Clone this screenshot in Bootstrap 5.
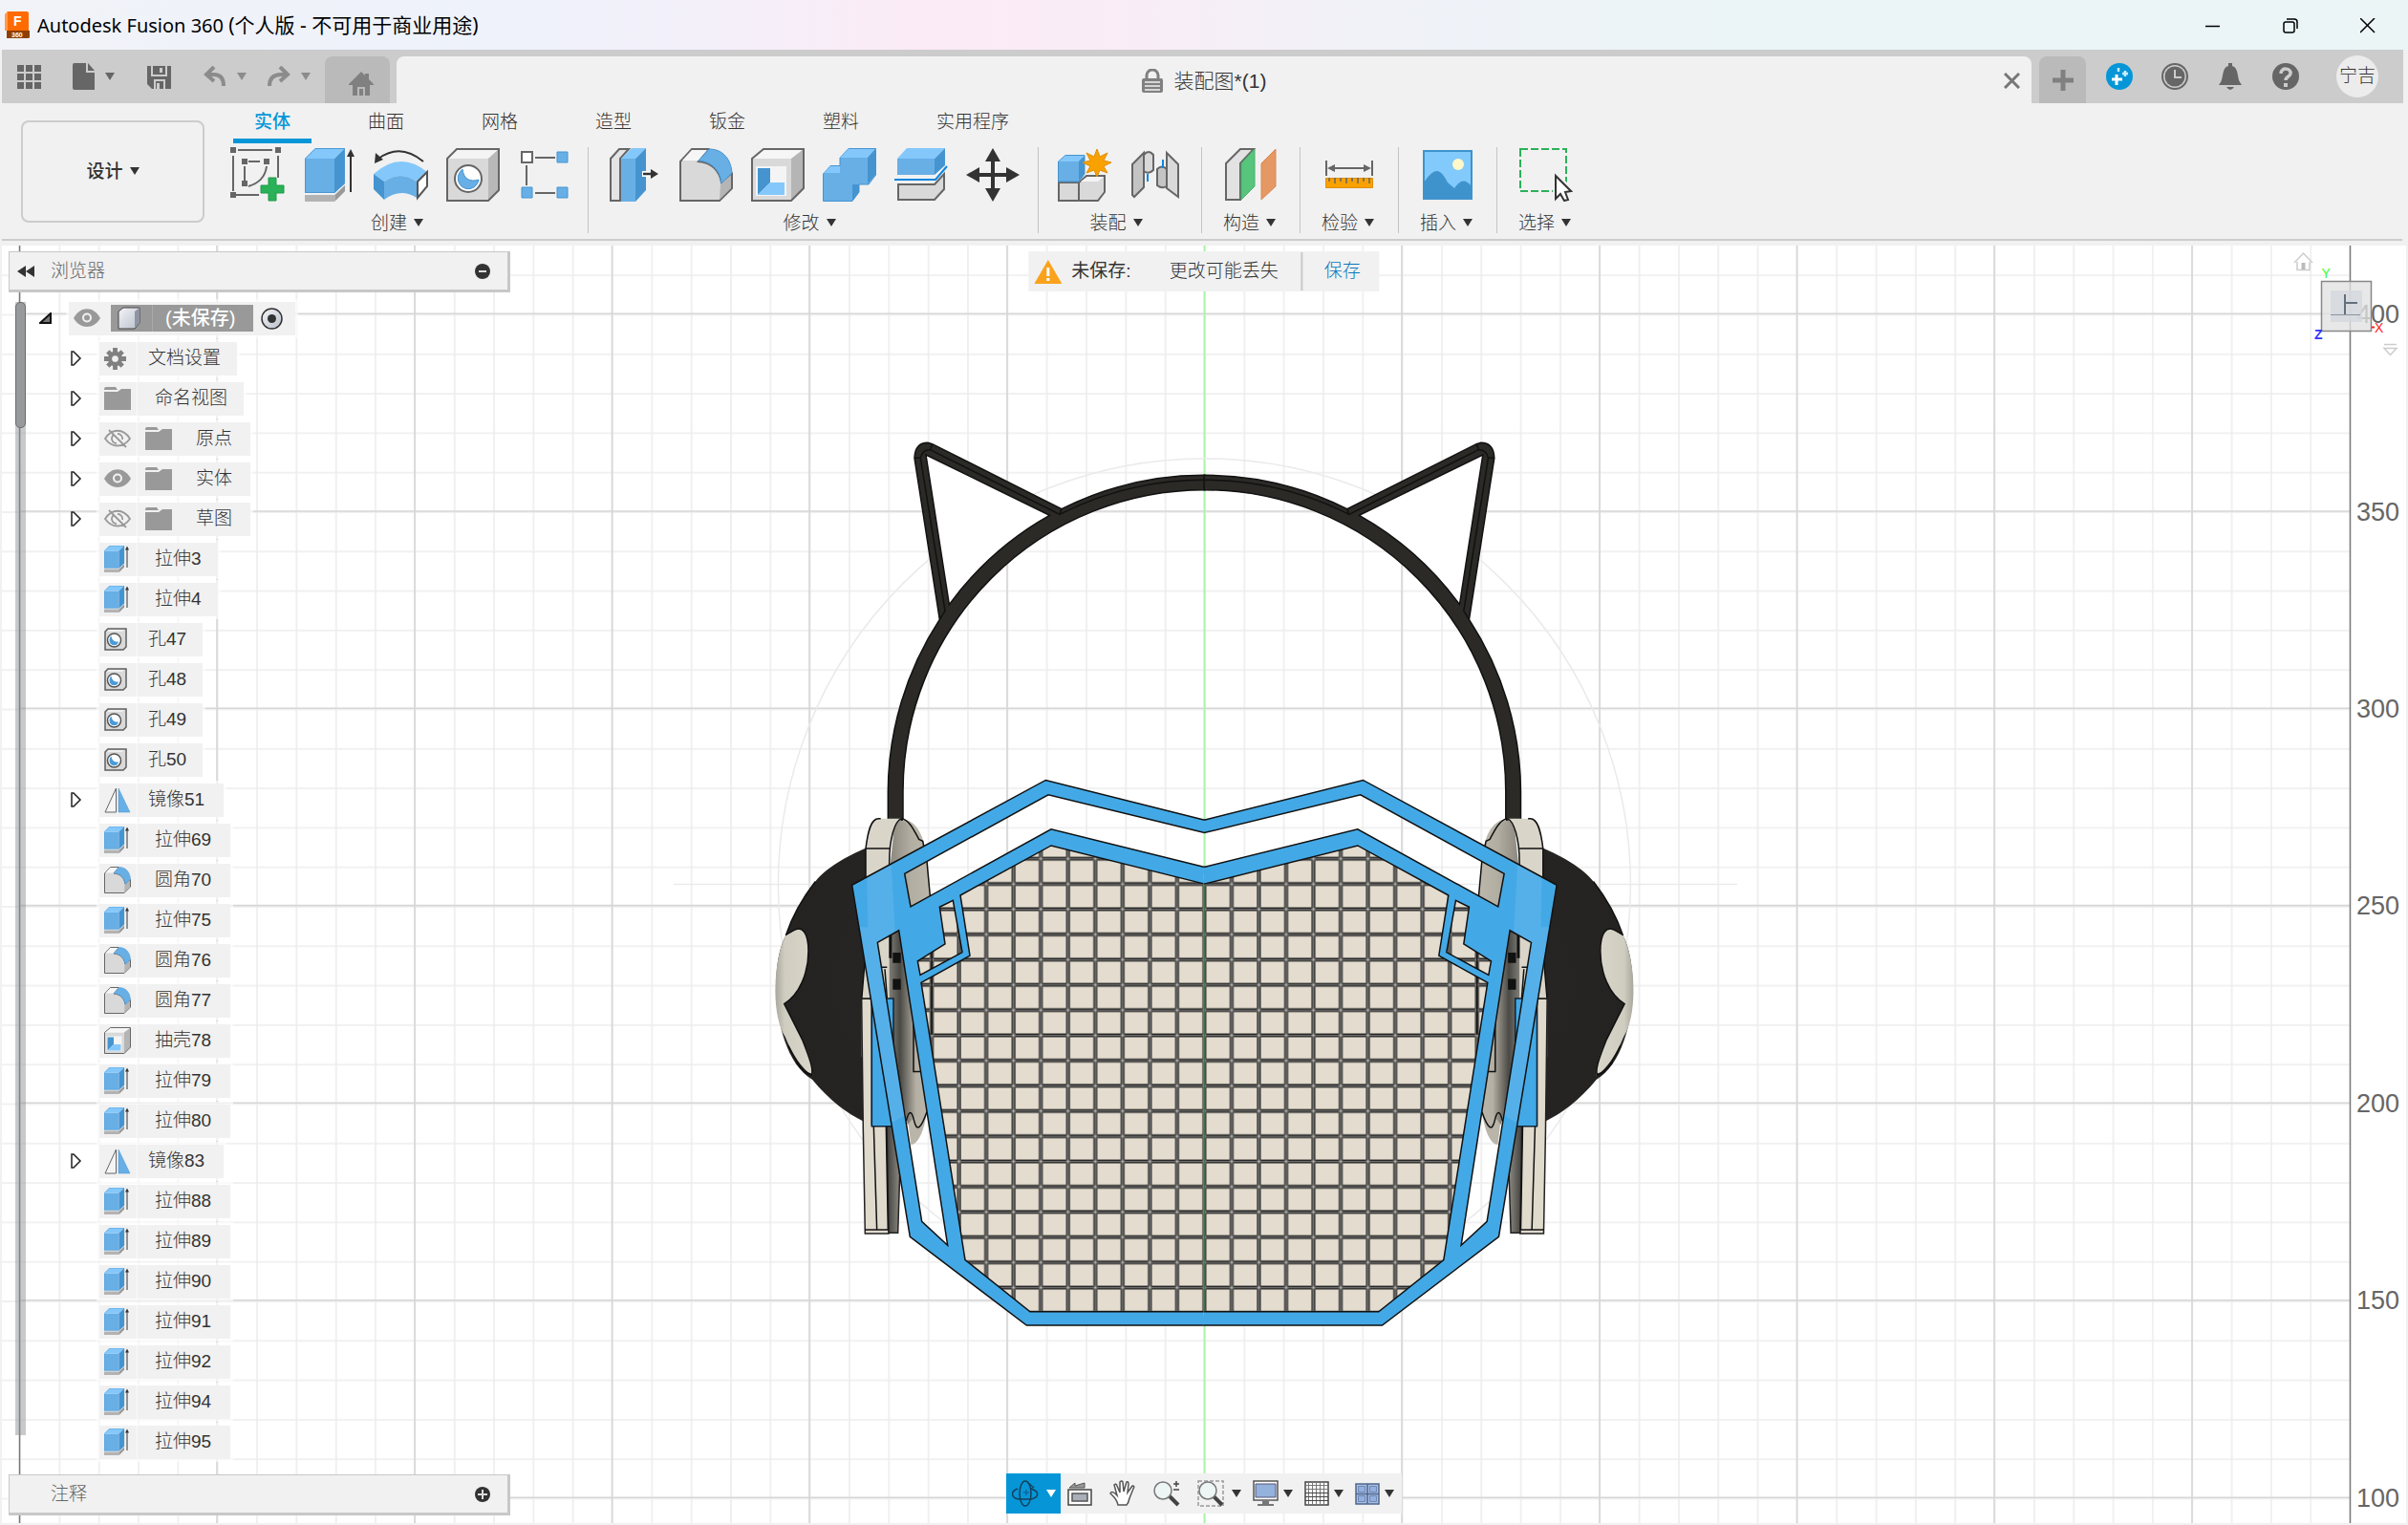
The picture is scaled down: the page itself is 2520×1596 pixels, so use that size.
<!DOCTYPE html>
<html lang="zh-CN">
<head>
<meta charset="utf-8">
<meta name="viewport" content="width=device-width, initial-scale=1">
<title>Autodesk Fusion 360</title>
<link rel="stylesheet" href="https://cdn.jsdelivr.net/npm/bootstrap@5.3.0/dist/css/bootstrap.min.css">
<script src="https://cdn.jsdelivr.net/npm/bootstrap@5.3.0/dist/js/bootstrap.bundle.min.js"></script>
<style>
body{font-family:"Liberation Sans","Noto Sans CJK SC",sans-serif;font-size:19px;line-height:24px;font-weight:300;color:#333;background:#f1f1f1;overflow:hidden}
button{background:none;border:0;padding:0;color:inherit;line-height:inherit;font-weight:inherit}
svg{display:block;flex:none}
.app-title{height:52px;padding:1px 2px 0 5px;font-family:"Noto Sans","Noto Sans CJK SC",sans-serif;font-size:20px;font-weight:400;color:#000;background:linear-gradient(90deg,#f1f3f8 0,#eef2fb 20%,#f3f0fa 29%,#fbebf6 38%,#faecf6 45%,#f0f2f8 58%,#ebf4f7 72%,#ebf5f6 100%)}
.app-title .edition{font-size:21px}
.win-btn{width:81px;height:52px;display:grid;place-items:center}
.doc-bar{height:56px;margin:0 5px 0 2px;background:#ccc;color:#666}
.doc-bar .caret::after{margin-left:10px}
.quick{width:338px}
.doc-tab{height:49px;border-radius:8px 8px 0 0;background:#bababa}
.home-tab{width:68px}
.plus-tab{width:49px;place-items:center}
.doc-active{background:#f1f1f1;font-size:21px;color:#333;margin:0 8px 0 7px;padding-top:2px}
.avatar{width:44px;height:44px;border-radius:50%;background:#ececec;color:#333;margin-left:9px}
.doc-tools{gap:30px;padding:0 26px 0 21px}
.ribbon{height:149px;background:#f1f1f1}
.ribbon-line{height:2px;background:#ccc;margin:0 6px 5px 2px}
.design-btn{width:192px;height:107px;border:2px solid #ccc;border-radius:8px;margin:18px 18px 0 22px;font-weight:500}
.rib-tabs{gap:37px;margin-left:12px;height:42px}
.rib-tab{min-width:82px;height:42px;padding:2px 22px 0;border-bottom:5px solid transparent;white-space:nowrap}
.rib-tab.on{color:#0696d7;border-color:#0696d7;font-weight:500}
.rib-group{padding:0 10px;border-right:1px solid #c4c4c4;height:90px;margin-top:4px}
.rib-group.first{padding:0 8px 0 0}
.rib-group.one{padding:0 14px 0 13px}
.rib-group:last-child{border:0}
.g-name{display:block;margin:0 auto;padding:10px 8px 0 0}
.one .g-name{padding-right:2px}
.tool{width:75px;height:58px;display:grid;place-items:center}
.caret::after{content:"";display:inline-block;border:5px solid transparent;border-top:8px solid currentColor;border-bottom:0;margin-left:7px;vertical-align:3px}
.viewport{background:#fff;margin:0 2px 2px;min-height:0}
.scene{inset:0;width:100%;height:100%}
.side{left:7px;top:6px;bottom:8px;width:525px}
.side-head{height:43px;background:#f1f1f1;border:1px solid #c8c8c8;border-width:1px 3px 3px 1px;color:#666;padding:0 18px 0 8px}
.side-head .ttl{margin-left:15px}
.side-head .solo{margin-left:35px}
.tree{margin-top:6px}
.track{width:11px;margin:4px 0 28px 7px;background:rgba(140,142,146,.48)}
.thumb{height:132px;background:#98999b;border:1px solid #6c6c6c;border-radius:5px}
.t-row{height:42px}
.exp{width:77px;padding-left:47px}
.root .exp{width:45px;padding-left:14px}
.chip{height:35px;background:#f1f1f1;box-shadow:0 0 0 3px rgba(255,255,255,.6)}
.root .chip{padding:0 13px 0 5px}
.ic{width:40px;padding-left:5px;border-right:1px solid #fafafa;height:35px}
.lbl{padding:0 17px 0 18px}
.lbl.n{padding-left:11px}
.lbl.d{padding-right:20px}
.lbl.f{padding:0 19px 0 25px}
.rootsel{height:28px;background:#999;color:#fff;font-size:20px;font-weight:500;margin-left:11px}
.rootsel .ic{width:44px;height:28px;padding-left:7px;border-color:#aaa}
.rootsel .txt{padding:0 19px 0 13px}
.notice{left:50%;transform:translateX(-50%);top:6px;height:42px;background:#f1f1f1;padding-left:6px}
.notice .sep{width:2px;height:40px;background:#c8c8c8}
.notice strong{margin-left:10px}
.notice .msg{margin:0 24px 0 40px}
.notice .save{color:#0a78bd;padding:0 20px 0 22px}
.view-bar{left:50%;transform:translateX(-50%);bottom:10px;height:42px;background:#f1f1f1;padding-right:8px}
.view-bar .caret::after{margin-left:5px;border-width:8px 5px 0}
.orbit{width:57px;height:42px;background:#0696d7;color:#fff;margin-right:7px}
.view-bar .orbit::after,.view-bar .wide::after{margin-left:8px}
.ln{fill:none;stroke:#111;stroke-width:1.5}
.model *{vector-effect:non-scaling-stroke}
</style>
</head>
<body>
<svg width="0" height="0" class="position-absolute" aria-hidden="true">
<defs>
<linearGradient id="gBox" x1="0" y1="0" x2="1" y2="1"><stop offset="0" stop-color="#f4f5f8"/><stop offset="1" stop-color="#b9bfcb"/></linearGradient>
<linearGradient id="gDark" x1="0" y1="0" x2="1" y2="0"><stop offset="0" stop-color="#8a877f"/><stop offset=".45" stop-color="#4a4945"/><stop offset="1" stop-color="#b3aea2"/></linearGradient>
<linearGradient id="gLow" x1="0" y1="0" x2="1" y2="0"><stop offset="0" stop-color="#3f3e3b"/><stop offset="1" stop-color="#8d8a82"/></linearGradient>
<linearGradient id="gCup" x1="0" y1="0" x2="1" y2="0"><stop offset="0" stop-color="#8b877d"/><stop offset=".5" stop-color="#b3aea2"/><stop offset="1" stop-color="#bdb8ac"/></linearGradient>
<radialGradient id="gEar" cx=".8" cy=".5" r=".9"><stop offset="0" stop-color="#262523"/><stop offset=".75" stop-color="#242321"/><stop offset="1" stop-color="#33322f"/></radialGradient>
<linearGradient id="gSpot" x1="0" y1="0" x2="1" y2="0"><stop offset="0" stop-color="#a9a79c"/><stop offset=".25" stop-color="#cfccc0"/><stop offset="1" stop-color="#dad6ca"/></linearGradient>
<pattern id="pMinor" x="20.1" y="39.4" width="41.33" height="41.3" patternUnits="userSpaceOnUse"><path d="M1 0V42M0 1H42" stroke="#ededed" stroke-width="1.6" fill="none"/></pattern>
<pattern id="pMesh" x="1368.2" y="1396.5" width="85.6" height="69" patternUnits="userSpaceOnUse">
<rect x="37" width="12" height="69" fill="#161616"/><rect y="29.5" width="86" height="10" fill="#161616"/><rect x="40" width="6" height="69" fill="#727272"/><rect y="33" width="86" height="3.6" fill="#727272"/><rect x="37" y="29.5" width="12" height="10" fill="#77746f"/><rect x="41" y="32.5" width="4" height="4" fill="#ddd"/></pattern>
<clipPath id="cOpen"><path d="M1413 327 930 222 645 358 580 390 511 538 522 597 660 1355 864 1497H1413Z"/></clipPath>
<symbol id="i-extrude" viewBox="0 0 52 56"><path fill="#68afe6" d="M0 11H31V47H0z"/><path fill="#84c8fb" d="M0 11 11 0H42L31 11z"/><path fill="#4594d0" d="M31 11 42 0V37L31 47z"/><path fill="none" stroke="#4a98d3" d="M.5 11 11 .5H41.5V37L31 46.5H.5z"/><path fill="#b3b3b3" d="M0 49H31L42 39V45L31 56H0z"/><path fill="#999" d="M32 49 42 39V45L32 55z"/><path stroke="#333" stroke-width="2" d="M48 6V46"/><path fill="#333" d="M44 9 48 1 52 9z"/></symbol>
<symbol id="i-hole" viewBox="0 0 56 56"><path fill="#d9d9d9" d="M1 11 11 1H55V44L44 55H1z"/><path fill="#f4f4f4" d="M1 11 11 1H55L44 11z"/><path fill="#b8b8b8" d="M44 11 55 1V44L44 55z"/><path fill="none" stroke="#666" stroke-width="2" d="M1 11 11 1H55V44L44 55H1z"/><circle cx="23" cy="32" r="14" fill="#fff" stroke="#666" stroke-width="2"/><path fill="#68afe6" stroke="#4594d0" d="M17 22C18 32 25 36 34 33C32 43 22 45 16 40C10 34 12 26 17 22z"/></symbol>
<symbol id="i-hole-s" viewBox="0 0 24 24"><path fill="#d9d9d9" stroke="#5f5f5f" stroke-width="1.500" d="M1 4 4 1H23V20L20 23H1z"/><path fill="#f0f0f0" d="M3 4 5 2H21L19 4z"/><circle cx="10.500" cy="13" r="7" fill="#fff" stroke="#555" stroke-width="1.500"/><path fill="#4b9bd6" d="M7.500 8.500C8 13 11 15 15 14.500C14 18.500 10 19.500 7 17C5 14.500 5 10.500 7.500 8.500z"/></symbol>
<symbol id="i-fillet" viewBox="0 0 56 56"><path fill="#d9d9d9" stroke="#666" stroke-width="2" d="M1 14 13 1H30L20 14C34 15 42 24 44 36L55 27V42L42 55H1z"/><path fill="#f6f6f6" d="M3 13 13 2H29L20 13z"/><path fill="#b5b5b5" d="M43 38 54 28V42L42 54z"/><path fill="#68afe6" stroke="#4594d0" d="M20 13 31 1C46 1 54 12 55 26L44 37C43 24 34 14 20 13z"/></symbol>
<symbol id="i-shell" viewBox="0 0 56 56"><path fill="#d9d9d9" d="M1 11H42V55H1z"/><path fill="#f6f6f6" d="M1 11 13 1H55L42 11z"/><path fill="#b5b5b5" d="M42 11 55 1V42L42 55z"/><path fill="none" stroke="#666" stroke-width="2" d="M1 11 13 1H55V42L42 55H1z"/><path fill="#f4f4f4" d="M5 19H37V50H5z"/><path fill="#4594d0" d="M7 21H20V36L7 49z"/><path fill="#84c8fb" d="M7 49 20 36H35V49z"/></symbol>
<symbol id="i-mirror" viewBox="0 0 56 56"><path fill="#f4f4f4" stroke="#666" stroke-width="2" d="M25 4V54H2z"/><path fill="#68afe6" stroke="#4594d0" d="M30 4V54H54z"/></symbol>
<symbol id="i-folder" viewBox="0 0 28 24"><path fill="#999" d="M0 2Q0 0 2 0H12L14 3H0zM0 5H14L18 2H28V24H0z"/></symbol>
<symbol id="i-eye" viewBox="0 0 28 20"><path fill="#999" d="M0 10C7-3 21-3 28 10C21 22 7 22 0 10z"/><circle cx="14" cy="9.500" r="5" fill="#f1f1f1"/><circle cx="14" cy="9.500" r="3" fill="#999"/></symbol>
<symbol id="i-hide" viewBox="0 0 28 20"><path fill="none" stroke="#999" stroke-width="1.800" d="M1 10C8-1 20-1 27 10C20 20 8 20 1 10zM5 1 23 19M10 6A5 5 0 0 0 13 15M14 5A5 5 0 0 1 19 11"/></symbol>
<symbol id="i-gear" viewBox="0 0 24 24"><g stroke="#808080" stroke-width="5"><path d="M12 0V24M0 12H24M4 4 20 20M20 4 4 20"/></g><circle cx="12" cy="12" r="8" fill="#808080"/><circle cx="12" cy="12" r="3.500" fill="#f1f1f1"/></symbol>
<symbol id="i-tri" viewBox="0 0 12 16"><path fill="#fff" stroke="#222" stroke-width="1.500" d="M1 1V15L3 15 10 8 3 1z"/></symbol>
</defs></svg>

<div class="d-flex flex-column vh-100">
<header class="app-title d-flex align-items-center">
<svg width="26" height="29" viewBox="0 0 26 29"><path fill="#ff6b00" d="M3 0H23Q25 0 25 2V20H0V4z"/><path fill="#ff9a4d" d="M3 0 3 20H0V3z"/><path fill="#8f3e00" d="M2 20H26V27Q26 28 24 28H2z"/><text x="9" y="15" font-family="Liberation Sans" font-size="14" font-weight="700" fill="#fff">F</text><text x="7" y="27" font-family="Liberation Sans" font-size="7" font-weight="700" fill="#fff">360</text></svg>
<span class="ms-2 me-auto">Autodesk Fusion 360 <span class="edition">(个人版 - 不可用于商业用途)</span></span>
<button class="win-btn" aria-label="最小化"><svg width="16" height="16"><path d="M0 8.500H15" stroke="#000" stroke-width="1.500"/></svg></button>
<button class="win-btn" aria-label="还原"><svg width="16" height="16" fill="none" stroke="#000" stroke-width="1.500"><rect x="1" y="4" width="11" height="11" rx="2"/><path d="M4 1H12Q15 1 15 4V11"/></svg></button>
<button class="win-btn" aria-label="关闭"><svg width="16" height="16"><path d="M0 0 15 15M15 0 0 15" stroke="#000" stroke-width="1.500"/></svg></button>
</header>

<div class="doc-bar d-flex align-items-end">
<div class="quick d-flex align-items-center h-100">
<button class="ms-3" aria-label="数据面板"><svg width="25" height="25" fill="#666"><path d="M0 0H7V7H0zM9 0H16V7H9zM18 0H25V7H18zM0 9H7V16H0zM9 9H16V16H9zM18 9H25V16H18zM0 18H7V25H0zM9 18H16V25H9zM18 18H25V25H18z"/></svg></button>
<button class="d-flex align-items-center caret" style="margin-left:33px" aria-label="文件"><svg width="24" height="28" fill="#666"><path d="M2 0H14V10H23V28H2Q0 28 0 26V2Q0 0 2 0z"/><path d="M16 0 23 8H16z"/></svg></button>
<button style="margin-left:34px" aria-label="保存文件"><svg width="25" height="25"><path fill="#666" d="M0 1H25V25H5L0 20z"/><path fill="none" stroke="#ccc" stroke-width="2" d="M5 1V11H20V1M8 25V16H18V25"/><path fill="#ccc" d="M13 3H16V8H13zM10 19H13V25H10z"/></svg></button>
<button class="d-flex align-items-center caret" style="margin-left:34px;color:#8c8c8c" aria-label="撤消"><svg width="25" height="22" fill="none" stroke="#8c8c8c" stroke-width="4"><path d="M11 1 3 9 11 16M3 9H11Q21 9 21 21"/></svg></button>
<button class="d-flex align-items-center caret" style="margin-left:22px;color:#8c8c8c" aria-label="重做"><svg width="25" height="22" fill="none" stroke="#8c8c8c" stroke-width="4"><path d="M13 1 21 9 13 16M21 9H14Q2 9 2 21"/></svg></button>
</div>
<button class="doc-tab home-tab d-flex justify-content-center align-items-center pt-1" aria-label="主页"><svg width="26" height="25" fill="#808080" class="ms-2 mt-1"><path d="M13 0 17 4V2H21V8L26 13V14H22V25H4V14H0V13z"/><path fill="none" stroke="#bababa" stroke-width="2" d="M10 25V17H16V25"/></svg></button>
<div class="doc-tab doc-active flex-grow-1 d-flex align-items-center">
<span class="ms-auto me-auto ps-2 d-flex align-items-center"><svg width="22" height="26" class="me-2"><path fill="none" stroke="#808080" stroke-width="3" d="M5 12V7A6 6 0 0 1 17 7V12"/><rect y="10" width="22" height="15" rx="2" fill="#808080"/><path stroke="#f1f1f1" stroke-width="1.500" d="M3 14H19M3 18H19M3 22H19"/></svg><span class="ms-1">装配图*(1)</span></span>
<button class="me-2 pe-1" aria-label="关闭文档"><svg width="17" height="17"><path d="M1 1 16 16M16 1 1 16" stroke="#777" stroke-width="3"/></svg></button>
</div>
<button class="doc-tab plus-tab d-grid" aria-label="新建"><svg width="22" height="22"><path d="M11 0V22M0 11H22" stroke="#808080" stroke-width="5"/></svg></button>
<div class="doc-tools d-flex align-items-center h-100">
<button aria-label="扩展"><svg width="28" height="28"><circle cx="14" cy="14" r="14" fill="#0696d7"/><path d="M11 12V23M6 17H17" stroke="#fff" stroke-width="3"/><path d="M20 8V14M17 11H23M13 5V9" stroke="#c8ecff" stroke-width="2.500"/></svg></button>
<button aria-label="作业状态"><svg width="28" height="28"><circle cx="14" cy="14" r="13" fill="none" stroke="#666" stroke-width="2"/><circle cx="14" cy="14" r="10.500" fill="#666"/><path d="M14 7V15H21" fill="none" stroke="#ccc" stroke-width="2"/></svg></button>
<button aria-label="通知"><svg width="28" height="28" fill="#666"><path d="M12 0H16V3C23 5 21 15 24 20L26 23H2L4 20C7 15 5 5 12 3zM10 25H18Q14 31 10 25z"/></svg></button>
<button aria-label="帮助"><svg width="28" height="28"><circle cx="14" cy="14" r="14" fill="#666"/><path d="M9 11C9 4 20 5 19 11C19 14 14 14 14 18" fill="none" stroke="#ccc" stroke-width="3.500"/><path fill="#ccc" d="M12 21H16V25H12z"/></svg></button>
<button class="avatar">宁吉</button>
</div>
</div>

<div class="ribbon d-flex flex-column">
<div class="d-flex flex-grow-1">
<button class="design-btn caret">设计</button>
<div>
<nav class="rib-tabs d-flex">
<button class="rib-tab on">实体</button><button class="rib-tab">曲面</button><button class="rib-tab">网格</button><button class="rib-tab">造型</button><button class="rib-tab">钣金</button><button class="rib-tab">塑料</button><button class="rib-tab">实用程序</button>
</nav>
<div class="d-flex">
<div class="rib-group first"><div class="d-flex">
<button class="tool" aria-label="创建草图"><svg width="58" height="58" viewBox="0 0 58 58"><path fill="none" stroke="#666" stroke-width="2" d="M3 9V46M8 3H44M50 9V32M3 50H30M15 20V36M19 15H31M38 20Q36 36 19 41"/><path fill="#666" d="M0 0H6V6H0zM47 0H53V6H47zM0 47H6V53H0zM12 12H18V18H12zM35 12H41V18H35zM12 35H18V41H12z"/><path fill="#2bb158" stroke="#1f9a49" d="M40 32H48V40H56V48H48V56H40V48H32V40H40z"/></svg></button>
<button class="tool" aria-label="拉伸"><svg width="52" height="56"><use href="#i-extrude"/></svg></button>
<button class="tool" aria-label="旋转"><svg width="58" height="56" viewBox="0 0 58 56"><path fill="none" stroke="#333" stroke-width="2" d="M5 11Q28-6 52 14"/><path fill="#333" d="M1 16 2 5 10 12z"/><path fill="#84c8fb" d="M0 27Q28 2 56 25L45 35Q28 23 11 35z"/><path fill="#68afe6" d="M11 35Q28 23 45 35V52Q28 41 11 54z"/><path fill="#4594d0" d="M0 27 11 35V54L0 43z"/><path fill="#fff" stroke="#555" stroke-width="2" d="M46 35 56 25V40L46 52z"/></svg></button>
<button class="tool" aria-label="孔"><svg width="56" height="56"><use href="#i-hole"/></svg></button>
<button class="tool" aria-label="阵列"><svg width="50" height="58"><path stroke="#666" stroke-width="2" d="M15 11H36M6 19V40M15 48H36"/><path fill="#fff" stroke="#666" stroke-width="2" d="M1 5H12V16H1z"/><path fill="#68afe6" stroke="#4594d0" d="M38 5H49V16H38zM38 42H49V53H38zM1 42H12V53H1z"/></svg></button>
</div><button class="g-name caret">创建</button></div>

<div class="rib-group"><div class="d-flex">
<button class="tool" aria-label="按拉"><svg width="52" height="56"><path fill="#e4e4e4" stroke="#666" stroke-width="2" d="M1 11 10 1H20L11 11V55H1z"/><path fill="#68afe6" d="M12 11H27V56H12z"/><path fill="#84c8fb" d="M12 11 23 0H38L27 11z"/><path fill="#4594d0" d="M27 11 38 0V44L27 56z"/><path stroke="#fff" stroke-width="6" d="M34 27H42"/><path stroke="#333" stroke-width="2.500" d="M35 27H45"/><path fill="#333" d="M43 22 51 27 43 32z"/></svg></button>
<button class="tool" aria-label="圆角"><svg width="56" height="56"><use href="#i-fillet"/></svg></button>
<button class="tool" aria-label="抽壳"><svg width="56" height="56"><use href="#i-shell"/></svg></button>
<button class="tool" aria-label="合并"><svg width="56" height="56"><path fill="#68afe6" stroke="#4594d0" d="M.5 27 8 18.500H18V10L27 .5H55.500V28L48 38H38V46L31 55.500H.5z"/><path fill="#84c8fb" d="M18 10 27 1H55L47 10zM1 26 8 19H18V26z"/><path fill="#4594d0" d="M47 10 55 1V28L47 37zM31 38H38V46L31 55z"/></svg></button>
<button class="tool" aria-label="分割实体"><svg width="56" height="56"><path fill="#68afe6" d="M3 11H42V28H3z"/><path fill="#84c8fb" d="M3 11 13 0H53L42 11z"/><path fill="#4594d0" d="M42 11 53 0V18L42 28z"/><path fill="none" stroke="#0c86e0" stroke-width="2" d="M0 33H43L55 19"/><path fill="#d9d9d9" stroke="#666" stroke-width="2" d="M4 38H42L52 27V43L42 54H4z"/></svg></button>
<button class="tool" aria-label="移动"><svg width="56" height="56" fill="#333"><path d="M26 12H30V26H44V30H30V44H26V30H12V26H26z"/><path d="M28 0 36 14H20zM28 56 20 42H36zM0 28 14 20V36zM56 28 42 36V20z"/></svg></button>
</div><button class="g-name caret">修改</button></div>

<div class="rib-group"><div class="d-flex">
<button class="tool" aria-label="新建零部件"><svg width="56" height="56"><path fill="#d9d9d9" stroke="#666" stroke-width="2" d="M1 36H22L30 29H49V46L42 55H1zM22 36V55"/><path fill="#f4f4f4" d="M24 35 31 30H48L42 35z"/><path fill="#68afe6" stroke="#4594d0" d="M.5 14 8 7.500H28V27L22 35H.5z"/><path fill="#84c8fb" d="M1 14 8 8H28L22 14z"/><path fill="#4594d0" d="M22 14 28 8V27L22 34z"/><path fill="#f9a100" stroke="#e08f00" d="M41 1 44 9 52 5 48 13 56 15 48 19 52 26 44 23 41 30 38 23 30 26 34 19 26 15 34 13 30 5 38 9z"/></svg></button>
<button class="tool" aria-label="联接"><svg width="52" height="52" stroke="#666" stroke-width="2"><path fill="#c4c4c4" d="M1 15 13 3V39L3 49 1 47z"/><path fill="#d9d9d9" d="M13 5Q18-1 23 5V21Q18 26 13 22z"/><path fill="#d9d9d9" d="M37 3 49 15V49L37 40z"/><path fill="#c4c4c4" d="M27 20Q32 15 37 20V38Q32 41 27 37z"/><path stroke="#0c86e0" d="M17 25V33M33 10V19"/></svg></button>
</div><button class="g-name caret">装配</button></div>

<div class="rib-group one"><button class="tool" aria-label="偏移平面"><svg width="54" height="56"><path fill="#e2e2e2" stroke="#666" stroke-width="2" d="M1 16 16 1H30L16 16V54H1z"/><path fill="#57c57c" stroke="#44b06a" d="M17 16 31 1V40L17 54z"/><path fill="#e59863" stroke="#d88b57" d="M38 16 53 1V40L38 54z"/></svg></button><button class="g-name caret">构造</button></div>
<div class="rib-group one"><button class="tool" aria-label="测量"><svg width="50" height="30"><path stroke="#666" stroke-width="2" d="M1 0V16M49 0V16M6 8H44"/><path fill="#666" d="M2 8 10 4V12zM48 8 40 12V4z"/><path fill="#f9a100" stroke="#e08f00" d="M.5 18.500H49.500V28.500H.5z"/><path stroke="#666" stroke-width="1.500" d="M4 18V22M10 18V24M16 18V22M22 18V24M28 18V22M34 18V24M40 18V22M46 18V24"/></svg></button><button class="g-name caret">检验</button></div>
<div class="rib-group one"><button class="tool" aria-label="插入图像"><svg width="52" height="52"><path fill="#82cafb" stroke="#3f93cd" stroke-width="2" d="M1 1H51V51H1z"/><circle cx="37" cy="15" r="6" fill="#fff8c9"/><path fill="#3f93cd" d="M1 34C12 18 18 18 26 34L33 40C40 30 45 31 51 38V51H1z"/></svg></button><button class="g-name caret">插入</button></div>
<div class="rib-group one"><button class="tool" aria-label="框选"><svg width="56" height="56"><path fill="none" stroke="#2bb158" stroke-width="2" stroke-dasharray="8 3" d="M1 1H49V45H1z"/><path fill="#fff" stroke="#f1f1f1" stroke-width="6" d="M38 29V53L44 48 48 55 52 54 48 46 55 45z"/><path fill="#fff" stroke="#333" stroke-width="2" d="M38 29V53L43 48 47 55 51 54 48 46 54 45z"/></svg></button><button class="g-name caret">选择</button></div>
</div>
</div>
</div>
<div class="ribbon-line"></div>
</div>

<main class="viewport flex-grow-1 position-relative overflow-hidden">
<svg class="scene position-absolute" viewBox="2 257 2516 1337" preserveAspectRatio="xMidYMid slice">
<rect x="2" y="257" width="2458" height="1337" fill="url(#pMinor)"/>
<path stroke="#d6d6d6" stroke-width="1.600" fill="none" d="M227 257V1594M434 257V1594M640.500 257V1594M847 257V1594M1054 257V1594M1467 257V1594M1674 257V1594M1880.500 257V1594M2087 257V1594M2294 257V1594M20 328.300H2459M20 535H2459M20 741.300H2459M20 947.600H2459M20 1154.200H2459M20 1360.700H2459M20 1567.300H2459"/>
<path stroke="#777" stroke-width="1.500" d="M20.500 257V1594M2459.500 257V1594"/>
<path stroke="#a9f5a9" stroke-width="2" d="M1260.500 257V1594"/>
<g fill="none" stroke="#eaeaea" stroke-width="1.500"><circle cx="1260.400" cy="926" r="446"/><path d="M705 925.500H1818"/></g>
<g fill="#666" font-family="Liberation Sans" font-size="27" text-anchor="end"><text x="2511" y="338">400</text><text x="2511" y="545">350</text><text x="2511" y="751">300</text><text x="2511" y="957">250</text><text x="2511" y="1164">200</text><text x="2511" y="1370">150</text><text x="2511" y="1577">100</text></g>

<!-- one half of the headset and mask; the other half is its mirror image -->
<g id="half">
<g class="model" transform="translate(790 440) scale(.333333)">
<path fill="#2b2a27" stroke="#111" stroke-width="1.500" d="M418 1255V1165A993 993 0 0 1 580 625L501 118Q503 70 543 70L557 74 963 278A993 993 0 0 1 1412 172V218A947 947 0 0 0 465 1165V1255z"/>
<path fill="#fff" stroke="#111" stroke-width="1.500" d="M537 108 925 298A993 993 0 0 0 610 578z"/>
<path class="ln" stroke="#000" d="M580 625 597 598 520 118Q525 92 550 92L957 295Q1170 187 1412 187M501 118H520M557 74 550 92M963 278 957 295"/>
</g>
<g class="model" transform="translate(790 800) scale(.333333 .382655)">
<path fill="#b9b5a9" d="M465 150C500 152 535 185 540 270C560 400 560 850 540 950C530 1010 510 1040 490 1040L470 900 440 300z"/>
<path fill="url(#gEar)" d="M350 228C290 250 220 285 190 320C150 365 115 420 97 468C40 560 60 800 180 862C235 920 290 955 342 977L370 600z"/>
<path fill="url(#gSpot)" d="M97 468C55 540 52 690 95 745Q130 820 180 852Q185 820 150 755L92 655C140 630 168 570 168 510C168 460 148 440 122 454z"/>
<path class="ln" d="M190 320C150 365 115 420 97 468M97 466 122 454C148 440 168 460 168 510C168 570 140 630 92 655L150 755C175 810 184 835 178 850Q150 850 105 770M130 815Q150 840 178 848"/>
<path fill="url(#gCup)" d="M440 150C485 152 500 180 515 205L527 215 540 265 550 360 560 700 540 950Q515 1040 500 980L488 950 480 985 455 900 422 500 422 300z"/>
<path fill="url(#gDark)" d="M415 440H470L505 700V960L480 985 415 700z"/>
<path class="ln" d="M460 148C485 152 500 180 515 205L527 210 540 265 550 360M475 975Q488 930 500 975T540 950"/>
<path fill="#d9d5c9" d="M348 310V230C355 180 365 148 388 148H460C440 160 422 200 422 270V800H335V640L345 540z"/>
<path class="ln" d="M335 645 345 540M348 310V230C355 180 365 148 388 148H395M460 148C440 155 422 200 422 270V290M348 230H422M385 555H415M335 641H367"/>
<path fill="#e0dacd" stroke="#222" stroke-width="1.500" d="M335 641H367V985H420V1283H346L340 1000z"/>
<path fill="url(#gLow)" stroke="#222" stroke-width="1.500" d="M414 985H440L455 1120 449 1281H420z"/>
<path class="ln" d="M373 990 383 1273M412 990 418 1273M345 1273H420"/>
<path fill="#111" d="M433 515H458V543H433zM433 587H458V616H433zM421 465H430V530H421z"/>
<path class="ln" d="M498 700V840H520M408 560 415 640"/>
<rect x="367" y="640" width="68" height="350" fill="#43a9e6" stroke="#123" stroke-width="1.500"/>
<path fill="#e3dccf" d="M1413 300 930 200 505 395 495 560 630 1340 864 1510H1413z"/>
<path fill="url(#pMesh)" clip-path="url(#cOpen)" d="M505 200H1413V1510H505z"/>
<path class="ln" d="M555 515V740"/>
<path stroke="#47704c" stroke-width="1.500" d="M1411 320V1500"/>
<path fill="#43a9e6" fill-rule="evenodd" d="M1413 152 913 43 305 330 487 1292 853 1534H1413V1497H864L660 1355 522 597 675 523 645 358 930 222 1413 327V281L930 177 489 389 470 299 921 83 1413 187zM580 390 622 372 651 514 519 576 511 538 597 491zM385 487 452 454 605 1315 524 1250z"/>
<path fill="#55b0e9" d="M352 309 428 273 440 460 385 487 472 960 430 980 330 445H355z"/>
<path class="ln" d="M1412 152 913 43 305 330 487 1292 853 1534H1412M1412 1497H864L660 1355 522 597 675 523 645 358 930 222 1412 327M1412 281 930 177 489 389 470 299 921 83 1412 187M580 390 622 372 651 514 519 576 511 538 597 491zM385 487 452 454 605 1315 524 1250z"/>
</g>
</g>
<use href="#half" transform="translate(2520.800) scale(-1 1)"/>

<g><path fill="none" stroke="#ccc" stroke-width="1.500" d="M2401 275 2410.500 265 2420 275M2404 274V282.500H2417V274"/><path fill="#bbb" d="M2408.500 275H2412.500V282H2408.500z"/>
<rect x="2429.500" y="294.500" width="52" height="52" fill="#e2e2e2" fill-opacity=".78" stroke="#888" stroke-width="1.500"/><rect x="2439" y="304" width="33" height="33" fill="#d3d8df" fill-opacity=".8"/><path fill="none" stroke="#66707c" stroke-width="2" d="M2454 308V330M2454 317H2467"/><path stroke="#8d949c" d="M2439 329.500H2470"/>
<g font-family="Liberation Sans" font-size="14"><text x="2429.500" y="291" fill="#3f3">Y</text><text x="2422" y="355" fill="#33f" font-weight="700">Z</text><text x="2485" y="348" fill="#f22">X</text></g><path stroke="#f22" stroke-width="2" d="M2482 342.500H2485"/>
<path fill="none" stroke="#ccc" stroke-width="1.500" d="M2495 360.500H2508M2495 364.500H2508L2501.500 371.500z"/></g>
</svg>

<aside class="side position-absolute d-flex flex-column">
<div class="side-head d-flex align-items-center"><svg width="20" height="12" fill="#333"><path d="M0 6 9 0V12zM9 6 18 0V12z"/></svg><span class="ttl">浏览器</span><button class="ms-auto" aria-label="折叠浏览器"><svg width="16" height="16"><circle cx="8" cy="8" r="8" fill="#333"/><path d="M4 8H12" stroke="#ddd" stroke-width="2"/></svg></button></div>
<div class="tree d-flex">
<div class="track"><div class="thumb"></div></div>
<ul class="list-unstyled m-0" id="tree">
<li class="t-row root d-flex align-items-center"><span class="exp"><svg width="13" height="12"><path d="M1 11 12 1V11z" fill="#777" stroke="#111" stroke-width="2"/></svg></span><div class="chip d-flex align-items-center"><svg width="28" height="20"><use href="#i-eye"/></svg><div class="rootsel d-flex align-items-center"><span class="ic d-flex align-items-center"><svg width="24" height="24" viewBox="0 0 24 24"><path fill="url(#gBox)" stroke="#444" d="M1 5 6 1H23V17L18 23H1z"/><path fill="#8f95a3" d="M18 5 23 1V17L18 22z"/></svg></span><span class="txt">(未保存)</span></div><svg width="23" height="23" class="ms-2"><circle cx="11.500" cy="11.500" r="10.500" fill="url(#gBox)" stroke="#333" stroke-width="1.500"/><circle cx="11.500" cy="11.500" r="4.500" fill="#333"/></svg></div></li>
<li class="t-row d-flex align-items-center"><span class="exp"><svg width="12" height="16"><use href="#i-tri"/></svg></span><div class="chip d-flex align-items-center"><span class="ic d-flex align-items-center"><svg width="23" height="23"><use href="#i-gear"/></svg></span><span class="lbl n">文档设置</span></div></li>
<li class="t-row d-flex align-items-center"><span class="exp"><svg width="12" height="16"><use href="#i-tri"/></svg></span><div class="chip d-flex align-items-center"><span class="ic d-flex align-items-center"><svg width="28" height="24"><use href="#i-folder"/></svg></span><span class="lbl">命名视图</span></div></li>
<li class="t-row d-flex align-items-center"><span class="exp"><svg width="12" height="16"><use href="#i-tri"/></svg></span><div class="chip d-flex align-items-center"><span class="ic d-flex align-items-center"><svg width="28" height="20"><use href="#i-hide"/></svg></span><svg width="28" height="24" class="ms-2"><use href="#i-folder"/></svg><span class="lbl f">原点</span></div></li>
<li class="t-row d-flex align-items-center"><span class="exp"><svg width="12" height="16"><use href="#i-tri"/></svg></span><div class="chip d-flex align-items-center"><span class="ic d-flex align-items-center"><svg width="28" height="20"><use href="#i-eye"/></svg></span><svg width="28" height="24" class="ms-2"><use href="#i-folder"/></svg><span class="lbl f">实体</span></div></li>
<li class="t-row d-flex align-items-center"><span class="exp"><svg width="12" height="16"><use href="#i-tri"/></svg></span><div class="chip d-flex align-items-center"><span class="ic d-flex align-items-center"><svg width="28" height="20"><use href="#i-hide"/></svg></span><svg width="28" height="24" class="ms-2"><use href="#i-folder"/></svg><span class="lbl f">草图</span></div></li>
</ul>
</div>
<div class="side-head d-flex align-items-center mt-auto"><span class="solo">注释</span><button class="ms-auto" aria-label="展开注释"><svg width="16" height="16"><circle cx="8" cy="8" r="8" fill="#333"/><path d="M3 8H13M8 3V13" stroke="#ddd" stroke-width="2"/></svg></button></div>
</aside>

<div class="notice position-absolute d-flex align-items-center text-nowrap"><svg width="29" height="25"><path fill="#faa21b" d="M14.500 0 29 25H0z"/><path fill="#fff" d="M13 8H16V17H13zM13 19H16V22H13z"/></svg><strong>未保存:</strong><span class="msg">更改可能丢失</span><span class="sep"></span><button class="save">保存</button></div>

<div class="view-bar position-absolute d-flex align-items-center">
<button class="orbit caret d-flex align-items-center justify-content-center" aria-label="动态观察"><svg width="28" height="28" fill="none" stroke="#15405c" stroke-width="1.500"><ellipse cx="14" cy="14" rx="6" ry="13"/><path d="M6 9C-2 12-1 19 8 20H20C29 18 28 12 22 10M17 3 23 8M19 8 24 11"/><path stroke="#0b6aa5" d="M12 13H18M15 10V16"/></svg></button>
<button aria-label="观察方向"><svg width="26" height="25"><path fill="#fff" stroke="#444" stroke-width="1.500" d="M1 8H25V24H1z"/><path fill="#a9aeb8" stroke="#555" stroke-width="1.500" d="M5 12H21V20H5z"/><path fill="#999" stroke="#555" d="M2 6 8 1 8 4 18 1 18 6z"/></svg></button>
<button style="margin-left:18px" aria-label="平移"><svg width="28" height="28"><path fill="#fff" stroke="#555" stroke-width="1.500" d="M9 26Q8 20 1 14Q2 11 6 14L8 16 5 5Q7 3 8 6L11 13 11 2Q13 0 14 2L15 12 18 2Q20 1 20 4L19 13 24 6Q27 6 25 9L21 19Q20 24 18 26z"/></svg></button>
<button style="margin-left:18px" aria-label="缩放"><svg width="28" height="28"><path stroke="#444" stroke-width="4" d="M17 17 26 26"/><circle cx="10" cy="11" r="9" fill="#eef6f5" stroke="#777" stroke-width="1.500"/><path stroke="#444" stroke-width="1.500" d="M21 4H27M24 1V7M21 10H27"/></svg></button>
<button class="caret wide d-flex align-items-center" style="margin-left:18px" aria-label="窗口缩放"><svg width="28" height="28"><path fill="none" stroke="#999" stroke-dasharray="4 2" stroke-width="1.500" d="M1 1H27V27H1z"/><path stroke="#444" stroke-width="4" d="M17 17 26 26"/><circle cx="11" cy="11" r="9" fill="#eef6f5" stroke="#777" stroke-width="1.500"/></svg></button>
<button class="caret d-flex align-items-center" style="margin-left:12px" aria-label="显示设置"><svg width="27" height="28"><path fill="#fff" stroke="#555" stroke-width="1.500" d="M1 1H26V21H1z"/><path fill="#93b2dc" stroke="#557" d="M3 4H24V18H3z"/><path fill="#777" d="M10 22H17V25H22V27H5V25H10z"/></svg></button>
<button class="caret d-flex align-items-center" style="margin-left:12px" aria-label="栅格"><svg width="26" height="26"><path fill="#fff" stroke="#444" stroke-width="1.500" d="M1 1H25V25H1z"/><path stroke="#777" d="M4.500 1V25M8.500 1V25M12.500 1V25M16.500 1V25M20.500 1V25M1 4.500H25M1 8.500H25"/><path stroke="#444" d="M1 12.500H25M1 16.500H25M1 20.500H25"/></svg></button>
<button class="caret d-flex align-items-center" style="margin-left:12px" aria-label="视口"><svg width="26" height="23"><path fill="#a9c0e4" stroke="#4f658c" stroke-width="1.500" d="M1 1H25V22H1zM13 1V22M1 11.500H25"/><path fill="#93b0de" stroke="#6f88b5" d="M3.500 3.500H10.500V9.500H3.500zM15.500 3.500H22.500V9.500H15.500zM3.500 13.500H10.500V19.500H3.500zM15.500 13.500H22.500V19.500H15.500z"/></svg></button>
</div>
</main>
</div>
<script>
// Modelling features listed under the root component
const kinds = {
  "拉伸": {icon: "extrude", w: 26, h: 28},
  "孔": {icon: "hole-s", w: 24, h: 24, narrow: true},
  "镜像": {icon: "mirror", w: 28, h: 28, narrow: true, open: true},
  "圆角": {icon: "fillet", w: 28, h: 28},
  "抽壳": {icon: "shell", w: 28, h: 28}
};
const features = ["拉伸3","拉伸4","孔47","孔48","孔49","孔50","镜像51","拉伸69","圆角70","拉伸75","圆角76","圆角77","抽壳78","拉伸79","拉伸80","镜像83","拉伸88","拉伸89","拉伸90","拉伸91","拉伸92","拉伸94","拉伸95"];
document.getElementById("tree").insertAdjacentHTML("beforeend", features.map(name => {
  const k = kinds[name.replace(/\d+/, "")];
  const arrow = k.open ? '<svg width="12" height="16"><use href="#i-tri"/></svg>' : "";
  const cls = (k.narrow ? " n" : "") + (name.length === 4 ? " d" : "");
  return `<li class="t-row d-flex align-items-center"><span class="exp">${arrow}</span><div class="chip d-flex align-items-center"><span class="ic d-flex align-items-center"><svg width="${k.w}" height="${k.h}"><use href="#i-${k.icon}"/></svg></span><span class="lbl${cls}">${name}</span></div></li>`;
}).join(""));
</script>
</body>
</html>
